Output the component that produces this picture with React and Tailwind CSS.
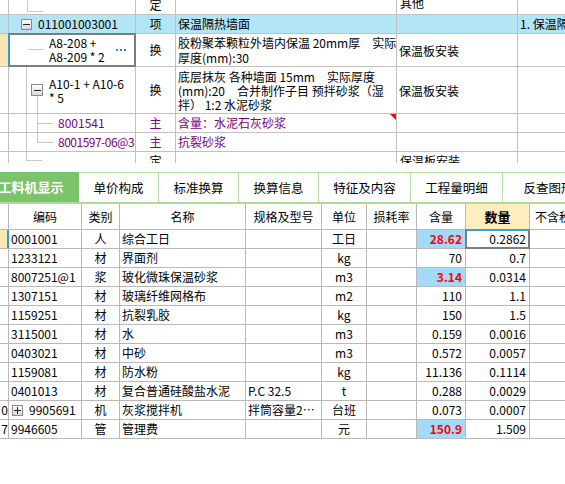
import React from "react";

const GRID = "border-[#c0c0c0]";

function Box({ plus = false, className = "" }) {
  return (
    <span className={`absolute flex items-center justify-center border border-[#8a8a8a] bg-linear-to-b from-white to-[#d8d8d8] ${className}`}>
      <span className="absolute w-[7px] h-px bg-[#222]" />
      {plus && <span className="absolute h-[7px] w-px bg-[#222]" />}
    </span>
  );
}

function VLine({ className = "" }) {
  return <span className={`absolute w-px bg-[#c8c8c8] ${className}`} />;
}

function HLine({ className = "" }) {
  return <span className={`absolute h-px bg-[#c8c8c8] ${className}`} />;
}

function TC({ w, className = "", children }) {
  return (
    <div className={`relative shrink-0 overflow-hidden border-r ${GRID} ${w} ${className}`}>
      {children}
    </div>
  );
}

function TopGrid() {
  const row = `relative flex border-b ${GRID}`;
  return (
    <div className="h-[163px] overflow-hidden">
      {/* row 0, cut at top */}
      <div className={`${row} h-[15px]`}>
        <TC w="w-[9px]" />
        <TC w="w-[127px]">
          <VLine className="left-[18px] top-0 h-[12px]" />
          <HLine className="left-[18px] top-[11px] w-[16px]" />
        </TC>
        <TC w="w-[40px]" className="flex justify-center">
          <span className="leading-[12px] mt-[-1px]">定</span>
        </TC>
        <TC w="w-[221px]" />
        <TC w="w-[121px]">
          <span className="absolute left-[3px] top-[-3px] leading-[12px]">其他</span>
        </TC>
        <div className="flex-1" />
      </div>

      {/* row 1 */}
      <div className={`${row} h-[19px] bg-[#b2e6f7]`}>
        <TC w="w-[9px]" />
        <TC w="w-[127px]" className="flex items-center">
          <Box className="left-[12px] top-[4px] w-[11px] h-[11px]" />
          <VLine className="left-[17px] top-[15px] bottom-0" />
          <span className="ml-[29px]">011001003001</span>
        </TC>
        <TC w="w-[40px]" className="flex items-center justify-center">项</TC>
        <TC w="w-[221px]" className="flex items-center pl-[2px]">保温隔热墙面</TC>
        <TC w="w-[121px]" />
        <div className="flex-1 overflow-hidden whitespace-nowrap flex items-center pl-[2px]">1. 保温隔热墙面</div>
      </div>

      {/* row 2, selected */}
      <div className={`${row} h-[33px]`}>
        <TC w="w-[9px]" className="bg-[#fce5b2]" />
        <TC w="w-[127px]" className="flex items-center">
          <HLine className="left-[19px] top-[15px] w-[16px]" />
          <div className="ml-[40px] leading-[14px] whitespace-nowrap">
            A8-208 +<br />A8-209 * 2
          </div>
          <span className="absolute left-[107px] top-[15px] flex gap-[2px]">
            <span className="w-[2px] h-[2px] bg-[#3b82d0]" />
            <span className="w-[2px] h-[2px] bg-[#3b82d0]" />
            <span className="w-[2px] h-[2px] bg-[#3b82d0]" />
          </span>
        </TC>
        <TC w="w-[40px]" className="flex items-center justify-center">换</TC>
        <TC w="w-[221px]" className="flex items-center pl-[2px] whitespace-nowrap leading-[15px]">
          <div>
            胶粉聚苯颗粒外墙内保温 20mm厚　实际<br />厚度(mm):30
          </div>
        </TC>
        <TC w="w-[121px]" className="flex items-center pl-[2px] pt-[2px]">保温板安装</TC>
        <div className="flex-1" />
        <div className="absolute left-[8px] top-[-1px] bottom-[-1px] w-[128px] border-2 border-[#7d7d7d] border-l-[#2b9ed8] z-10" />
      </div>

      {/* row 3 */}
      <div className={`${row} h-[47px]`}>
        <TC w="w-[9px]" />
        <TC w="w-[127px]" className="flex items-start">
          <VLine className="left-[17px] top-0 bottom-0" />
          <Box className="left-[22px] top-[17px] w-[12px] h-[12px]" />
          <VLine className="left-[28px] top-[29px] bottom-0" />
          <div className="ml-[40px] mt-[10px] leading-[14px] whitespace-nowrap">
            A10-1 + A10-6<br />* 5
          </div>
        </TC>
        <TC w="w-[40px]" className="flex items-center justify-center">换</TC>
        <TC w="w-[221px]" className="flex items-start pl-[2px] pt-[3px] whitespace-nowrap leading-[14px]">
          <div>
            底层抹灰 各种墙面 15mm　实际厚度<br />(mm):20　合并制作子目 预拌砂浆（湿<br />拌） 1:2 水泥砂浆
          </div>
        </TC>
        <TC w="w-[121px]" className="flex items-center pl-[2px] pt-[2px]">保温板安装</TC>
        <div className="flex-1" />
      </div>

      {/* row 4 */}
      <div className={`${row} h-[19px] text-[#800080]`}>
        <TC w="w-[9px]" />
        <TC w="w-[127px]" className="flex items-center">
          <VLine className="left-[17px] top-0 bottom-0" />
          <VLine className="left-[28px] top-0 bottom-0" />
          <HLine className="left-[28px] top-[9px] w-[16px]" />
          <span className="ml-[49px]">8001541</span>
        </TC>
        <TC w="w-[40px]" className="flex items-center justify-center">主</TC>
        <TC w="w-[221px]" className="flex items-center pl-[2px]">
          含量：水泥石灰砂浆
          <span className="absolute right-0 top-0 w-0 h-0 border-t-[6px] border-l-[6px] border-t-[#ff0000] border-l-transparent" />
        </TC>
        <TC w="w-[121px]" />
        <div className="flex-1" />
      </div>

      {/* row 5 */}
      <div className={`${row} h-[19px] text-[#800080]`}>
        <TC w="w-[9px]" />
        <TC w="w-[127px]" className="flex items-center">
          <VLine className="left-[17px] top-0 bottom-0" />
          <VLine className="left-[28px] top-0 h-[10px]" />
          <HLine className="left-[28px] top-[9px] w-[16px]" />
          <span className="ml-[49px] whitespace-nowrap tracking-[-0.5px]">8001597-06@3</span>
        </TC>
        <TC w="w-[40px]" className="flex items-center justify-center">主</TC>
        <TC w="w-[221px]" className="flex items-center pl-[2px]">抗裂砂浆</TC>
        <TC w="w-[121px]" />
        <div className="flex-1" />
      </div>

      {/* row 6, cut at bottom */}
      <div className={`${row} h-[19px]`}>
        <TC w="w-[9px]" />
        <TC w="w-[127px]">
          <VLine className="left-[17px] top-0 h-[9px]" />
          <HLine className="left-[17px] top-[8px] w-[16px]" />
        </TC>
        <TC w="w-[40px]" className="flex justify-center">
          <span className="mt-[2px] leading-[14px]">定</span>
        </TC>
        <TC w="w-[221px]" />
        <TC w="w-[121px]">
          <span className="absolute left-[3px] top-[2px] leading-[14px]">保温板安装</span>
        </TC>
        <div className="flex-1" />
      </div>
    </div>
  );
}

function Tabs() {
  const tabs = [
    ["单价构成", "w-[80px]"],
    ["标准换算", "w-[80px]"],
    ["换算信息", "w-[80px]"],
    ["特征及内容", "w-[92px]"],
    ["工程量明细", "w-[92px]"],
    ["反查图形", "w-[92px]"],
  ];
  return (
    <div className="flex h-[32px] border-b-2 border-[#acdb9b] overflow-hidden whitespace-nowrap">
      <div className="shrink-0 w-[96px] ml-[-17px] bg-[#7cc46a] text-white font-bold text-[13px] flex items-center justify-center">
        工料机显示
      </div>
      {tabs.map(([t, w]) => (
        <div key={t} className={`shrink-0 ${w} border-t border-r border-[#b6e0a6] flex items-center justify-center text-[12.5px]`}>
          {t}
        </div>
      ))}
    </div>
  );
}

const BW = ["w-[9px]", "w-[73px]", "w-[38px]", "w-[126px]", "w-[76px]", "w-[45px]", "w-[50px]", "w-[49px]", "w-[64px]"];
const BG = "border-[#b9b9b9]";

const rows = [
  { no: "", code: "0001001", kind: "人", name: "综合工日", spec: "", unit: "工日", q: "28.62", hl: true, n: "0.2862", sel: true },
  { no: "", code: "1233121", kind: "材", name: "界面剂", spec: "", unit: "kg", q: "70", n: "0.7" },
  { no: "", code: "8007251@1", kind: "浆", name: "玻化微珠保温砂浆", spec: "", unit: "m3", q: "3.14", hl: true, n: "0.0314" },
  { no: "", code: "1307151", kind: "材", name: "玻璃纤维网格布", spec: "", unit: "m2", q: "110", n: "1.1" },
  { no: "", code: "1159251", kind: "材", name: "抗裂乳胶", spec: "", unit: "kg", q: "150", n: "1.5" },
  { no: "", code: "3115001", kind: "材", name: "水", spec: "", unit: "m3", q: "0.159", n: "0.0016" },
  { no: "", code: "0403021", kind: "材", name: "中砂", spec: "", unit: "m3", q: "0.572", n: "0.0057" },
  { no: "", code: "1159081", kind: "材", name: "防水粉", spec: "", unit: "kg", q: "11.136", n: "0.1114" },
  { no: "", code: "0401013", kind: "材", name: "复合普通硅酸盐水泥", spec: "P.C 32.5", unit: "t", q: "0.288", n: "0.0029" },
  { no: "0", code: "9905691", kind: "机", name: "灰浆搅拌机", spec: "拌筒容量2…", unit: "台班", q: "0.073", n: "0.0007", plus: true },
  { no: "7", code: "9946605", kind: "管", name: "管理费", spec: "", unit: "元", q: "150.9", hl: true, n: "1.509" },
];

function BC({ i, className = "", children }) {
  return (
    <div className={`relative shrink-0 overflow-hidden whitespace-nowrap border-r ${BG} ${BW[i]} flex items-center ${className}`}>
      {children}
    </div>
  );
}

function Materials() {
  return (
    <div>
      <div className={`flex h-[26px] border-b ${BG}`}>
        <BC i={0} />
        <BC i={1} className="justify-center">编码</BC>
        <BC i={2} className="justify-center">类别</BC>
        <BC i={3} className="justify-center">名称</BC>
        <BC i={4} className="justify-center">规格及型号</BC>
        <BC i={5} className="justify-center">单位</BC>
        <BC i={6} className="justify-center">损耗率</BC>
        <BC i={7} className="justify-center">含量</BC>
        <BC i={8} className="justify-center bg-[#fdeebf] font-bold text-[13px]">数量</BC>
        <div className="flex-1 overflow-hidden whitespace-nowrap flex items-center pl-[5px]">不含税市场价合计</div>
      </div>
      {rows.map((r) => (
        <div key={r.code} className={`relative flex h-[19px] border-b ${BG}`}>
          <BC i={0} className={r.sel ? "bg-[#fde6b4] border-r-2 border-r-[#2b9ed8]" : "justify-end"}>
            {r.no}
          </BC>
          <BC i={1} className={r.plus ? "pl-[3px]" : "pl-[2px]"}>
            {r.plus && <Box plus className="left-[3px] top-[4px] w-[11px] h-[11px]" />}
            <span className={r.plus ? "ml-[17px]" : ""}>{r.code}</span>
          </BC>
          <BC i={2} className="justify-center">{r.kind}</BC>
          <BC i={3} className="pl-[2px]">{r.name}</BC>
          <BC i={4} className="pl-[2px]">{r.spec}</BC>
          <BC i={5} className="justify-center">{r.unit}</BC>
          <BC i={6} />
          <BC i={7} className={`justify-end pr-[3px] ${r.hl ? "bg-[#a3daf9] text-[#ff0000] font-bold" : ""}`}>
            {r.q}
          </BC>
          <BC i={8} className="justify-end pr-[3px]">{r.n}</BC>
          <div className="flex-1" />
          {r.sel && (
            <div className="absolute left-[465px] top-[-1px] bottom-[-1px] w-[65px] border-2 border-[#7d7d7d] border-t-[#3aa0d2] z-10" />
          )}
        </div>
      ))}
    </div>
  );
}

export default function App() {
  return (
    <div className="w-[565px] h-[484px] overflow-hidden bg-white text-black text-[12px] leading-[14px] font-['Noto_Sans_CJK_SC',sans-serif]">
      <TopGrid />
      <div className="h-[9px]" />
      <Tabs />
      <Materials />
    </div>
  );
}
